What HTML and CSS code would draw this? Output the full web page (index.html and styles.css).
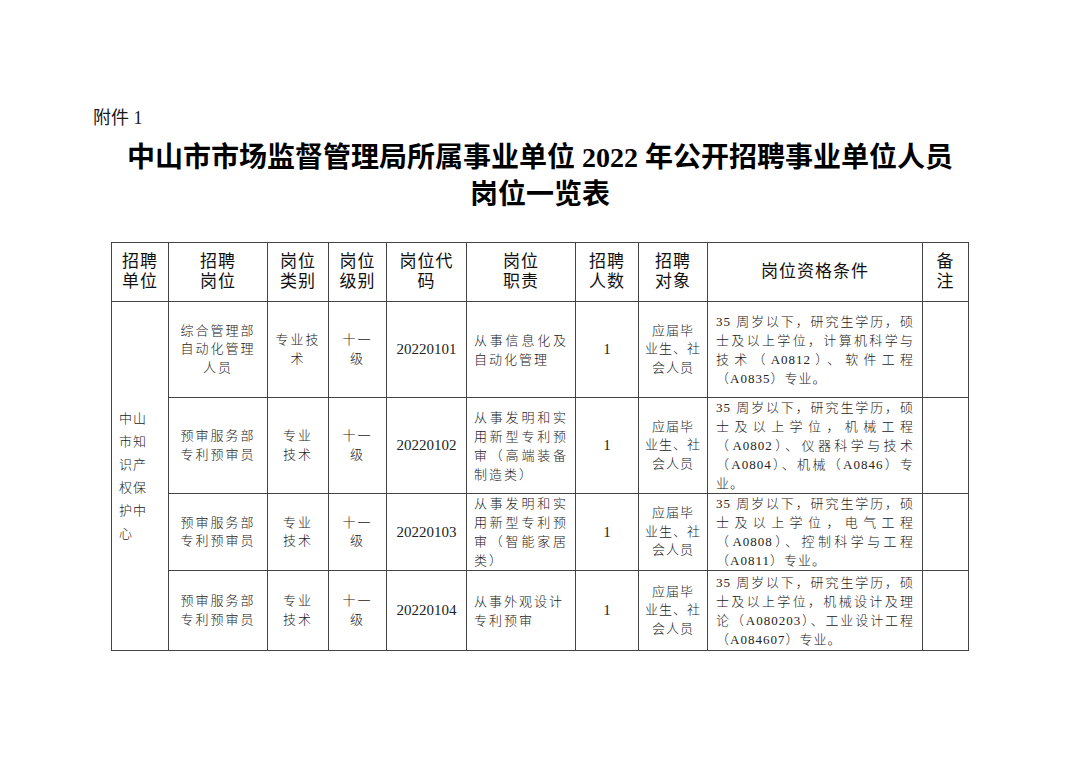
FILE: index.html
```html
<!DOCTYPE html>
<html lang="zh-CN">
<head>
<meta charset="utf-8">
<title>岗位一览表</title>
<link rel="stylesheet" href="styles.css">
</head>
<body>
<div class="page">
  <div class="attach">附件 1</div>
  <h1 class="title">中山市市场监督管理局所属事业单位 2022 年公开招聘事业单位人员<br>岗位一览表</h1>
  <table class="grid">
    <colgroup>
      <col class="w1"><col class="w2"><col class="w3"><col class="w4"><col class="w5">
      <col class="w6"><col class="w7"><col class="w8"><col class="w9"><col class="w10">
    </colgroup>
    <thead>
      <tr class="rh">
        <th>招聘<br>单位</th>
        <th>招聘<br>岗位</th>
        <th>岗位<br>类别</th>
        <th>岗位<br>级别</th>
        <th>岗位代<br>码</th>
        <th>岗位<br>职责</th>
        <th>招聘<br>人数</th>
        <th>招聘<br>对象</th>
        <th>岗位资格条件</th>
        <th>备<br>注</th>
      </tr>
    </thead>
    <tbody>
      <tr class="r1">
        <td rowspan="4" class="unit">中山<br>市知<br>识产<br>权保<br>护中<br>心</td>
        <td class="ctr">综合管理部<br>自动化管理<br>人员</td>
        <td class="ctr">专业技<br>术</td>
        <td class="ctr">十一<br>级</td>
        <td class="num">20220101</td>
        <td class="duty"><span class="j">从事信息化及</span><span>自动化管理</span></td>
        <td class="num">1</td>
        <td class="ctr obj">应届毕<br>业生、社<br>会人员</td>
        <td class="q"><span class="j">35 周岁以下，研究生学历，硕</span><span class="j">士及以上学位，计算机科学与</span><span class="j">技术（A0812）、软件工程</span><span>（A0835）专业。</span></td>
        <td></td>
      </tr>
      <tr class="r2">
        <td class="ctr">预审服务部<br>专利预审员</td>
        <td class="ctr">专业<br>技术</td>
        <td class="ctr">十一<br>级</td>
        <td class="num">20220102</td>
        <td class="duty"><span class="j">从事发明和实</span><span class="j">用新型专利预</span><span class="j">审（高端装备</span><span>制造类）</span></td>
        <td class="num">1</td>
        <td class="ctr obj">应届毕<br>业生、社<br>会人员</td>
        <td class="q"><span class="j">35 周岁以下，研究生学历，硕</span><span class="j">士及以上学位，机械工程</span><span class="j">（A0802）、仪器科学与技术</span><span class="j">（A0804）、机械（A0846）专</span><span>业。</span></td>
        <td></td>
      </tr>
      <tr class="r3">
        <td class="ctr">预审服务部<br>专利预审员</td>
        <td class="ctr">专业<br>技术</td>
        <td class="ctr">十一<br>级</td>
        <td class="num">20220103</td>
        <td class="duty"><span class="j">从事发明和实</span><span class="j">用新型专利预</span><span class="j">审（智能家居</span><span>类）</span></td>
        <td class="num">1</td>
        <td class="ctr obj">应届毕<br>业生、社<br>会人员</td>
        <td class="q"><span class="j">35 周岁以下，研究生学历，硕</span><span class="j">士及以上学位，电气工程</span><span class="j">（A0808）、控制科学与工程</span><span>（A0811）专业。</span></td>
        <td></td>
      </tr>
      <tr class="r4">
        <td class="ctr">预审服务部<br>专利预审员</td>
        <td class="ctr">专业<br>技术</td>
        <td class="ctr">十一<br>级</td>
        <td class="num">20220104</td>
        <td class="duty"><span>从事外观设计</span><span>专利预审</span></td>
        <td class="num">1</td>
        <td class="ctr obj">应届毕<br>业生、社<br>会人员</td>
        <td class="q"><span class="j">35 周岁以下，研究生学历，硕</span><span class="j">士及以上学位，机械设计及理</span><span class="j">论（A080203）、工业设计工程</span><span>（A084607）专业。</span></td>
        <td></td>
      </tr>
    </tbody>
  </table>
</div>
</body>
</html>
```

FILE: styles.css
```css
html, body {
  margin: 0;
  padding: 0;
  background: #ffffff;
}

body {
  font-family: "Liberation Serif", "Noto Sans CJK SC", serif;
  color: #1a1a1a;
}

.page {
  width: 1080px;
  height: 763px;
  padding-top: 106px;
  box-sizing: border-box;
}

.attach {
  margin-left: 93px;
  font-size: 18px;
  line-height: 24px;
  height: 24px;
}

.title {
  margin: 9px 0 0 0;
  text-align: center;
  font-size: 28px;
  line-height: 37px;
  font-weight: 700;
  color: #000;
  letter-spacing: 0;
}

.grid {
  margin: 29px auto 0 auto;
  width: 857px;
  table-layout: fixed;
  border-collapse: collapse;
  border: 1px solid #444;
}

.w1 { width: 57px; }
.w2 { width: 99px; }
.w3 { width: 61px; }
.w4 { width: 58px; }
.w5 { width: 80px; }
.w6 { width: 109px; }
.w7 { width: 63px; }
.w8 { width: 69px; }
.w9 { width: 215px; }
.w10 { width: 46px; }

.grid th,
.grid td {
  border: 1px solid #444;
  padding: 0 4px;
  vertical-align: middle;
  overflow: hidden;
  font-family: "Liberation Serif", "Noto Sans CJK SC", serif;
}

.grid th {
  font-weight: 400;
  font-size: 17px;
  line-height: 20px;
  letter-spacing: 1px;
  text-align: center;
  color: #111;
  white-space: nowrap;
}

.rh { height: 59px; }
.r1 { height: 96px; }
.r2 { height: 96px; }
.r3 { height: 77px; }
.r4 { height: 80px; }

.grid td {
  font-size: 13px;
  line-height: 18.5px;
  color: #222;
}

.ctr {
  text-align: center;
  letter-spacing: 2px;
  white-space: nowrap;
  font-weight: 300;
}

.obj {
  letter-spacing: 1px;
}

.unit {
  text-align: left;
  padding-left: 7px !important;
  letter-spacing: 1px;
  line-height: 23px !important;
  font-weight: 300;
}

.num {
  text-align: center;
  font-size: 15px !important;
}

.duty {
  padding: 0 7px !important;
  font-weight: 300;
}

.duty span,
.q span {
  display: block;
  white-space: nowrap;
  text-align: left;
  line-height: 19px;
}

.duty span {
  letter-spacing: 2px;
}

.q {
  padding: 0 8px !important;
  font-weight: 300;
}

.q span {
  letter-spacing: 1px;
}

.duty .j,
.q .j {
  text-align: justify;
  text-align-last: justify;
}
```
